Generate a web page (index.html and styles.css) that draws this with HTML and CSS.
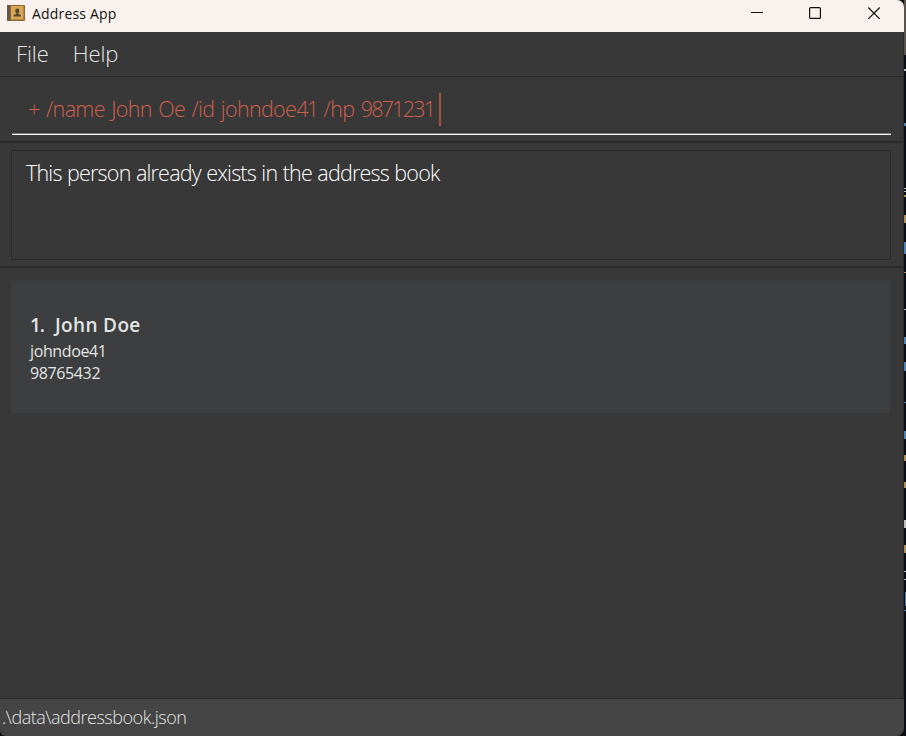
FILE: index.html
```html
<!DOCTYPE html>
<html lang="en">
<head>
<meta charset="utf-8">
<title>Address App</title>
<link rel="stylesheet" href="styles.css">
</head>
<body>
<div class="desktop">
<div class="window">
  <header class="titlebar">
    <svg class="app-icon" width="18" height="18" viewBox="0 0 18 18">
      <rect x="0" y="1" width="18" height="16" rx="1" fill="#94652d"/>
      <rect x="0" y="1" width="3" height="16" fill="#66574c"/>
      <rect x="4" y="2" width="12.5" height="13.5" fill="#d6a755"/>
      <path d="M10.3 4.6a2.1 2.1 0 0 1 2.1 2.1c0 1.1-.5 1.900-1.100 2.400v.8l2.700 1v1.600H6.600v-1.600l2.700-1v-.8c-.6-.5-1.100-1.300-1.100-2.400a2.100 2.100 0 0 1 2.100-2.100z" fill="#574632"/>
    </svg>
    <span class="title">Address App</span>
    <svg class="controls" width="130" height="14" viewBox="0 0 130 14" fill="none" stroke="#111" stroke-width="1.200">
      <path d="M0 5.500h12" stroke-width="1"/>
      <rect x="58.600" y="0.600" width="10.800" height="10.800" rx="1"/>
      <path d="M117.300 .5l11.400 11.400M128.700 .5l-11.400 11.400"/>
    </svg>
  </header>
  <nav class="menubar">
    <span class="file">File</span>
    <span class="help">Help</span>
  </nav>
  <section class="command-pane">
    <div class="command-field"><span class="command">+ /name John Oe /id johndoe<span class="digits">41</span> /hp <span class="digits">9871231</span></span><i class="caret"></i></div>
  </section>
  <section class="result-pane">
    <div class="result-box"><span class="result">This person already exists in the address book</span></div>
  </section>
  <main class="list-pane">
    <article class="card">
      <h1><span class="index">1.</span><span class="name">John Doe</span></h1>
      <p class="user">johndoe41</p>
      <p class="phone">98765432</p>
    </article>
  </main>
  <footer class="statusbar"><span class="path">.\data\addressbook.json</span></footer>
</div>
<svg class="backdrop" width="2" height="736" viewBox="0 0 2 736">
  <path d="M0 0h2v55H0z" fill="#58544e"/>
  <path d="M0 69h2v2H0zM0 188h2v1H0zM0 191h2v1H0zM0 309h2v1H0zM0 520h2v8H0zM0 571h2v1H0zM0 579h2v1H0z" fill="#bbb"/>
  <path d="M0 195h2v2H0zM0 215h2v8H0zM0 272h2v1H0zM0 455h2v6H0zM0 482h2v6H0zM0 545h2v8H0z" fill="#a98d52"/>
  <path d="M0 123h2v3H0zM0 242h2v12H0zM0 337h2v7H0zM0 362h2v9H0zM0 402h2v1H0zM0 431h2v8H0zM1 592h1v14H1zM0 610h2v1H0z" fill="#4b83b5"/>
</svg>
</div>
</body>
</html>
```
FILE: styles.css
```css
* { box-sizing: border-box; }
body { margin: 0; background: #0c1016; font-family: "Open Sans", "Noto Sans", sans-serif; color: #e4e4e4; }
.desktop { display: flex; width: 906px; height: 736px; overflow: hidden; }
.window { width: 904px; height: 736px; display: flex; flex-direction: column; background: #383838; border-radius: 0 7px 8px 6px; overflow: hidden; }
.backdrop { flex: none; }
span, p { white-space: pre; }
.titlebar { flex: none; height: 32px; background: #f9f1ed; color: #111; display: flex; align-items: flex-start; padding: 4px 23px 0 7px; }
.app-icon { flex: none; }
.title { font-size: 14px; line-height: 20px; margin-left: 7px; letter-spacing: .17px; }
.controls { margin: 3px 0 0 auto; }
.menubar, .command-pane, .result-pane, .list-pane { border-right: 1px solid #2d2d2d; }
.menubar { flex: none; height: 45px; border-bottom: 1px solid #2a2a2a; display: flex; gap: 24px; padding-left: 16px; font-size: 22px; line-height: 43px; font-weight: 300; letter-spacing: -.1px; }
.command-pane { flex: none; height: 66px; padding: 8px 12px; border-bottom: 2px solid #2a2a2a; }
.command-field { height: 50px; border-bottom: 1px solid #fff; box-shadow: inset 0 -1px #777; display: flex; align-items: flex-start; padding: 8px 0 0 16px; color: #d0604c; font-size: 21.5px; font-weight: 300; }
.command { line-height: 30px; margin-top: 1px; letter-spacing: -.66px; word-spacing: 1.4px; }
.digits { letter-spacing: -1.75px; }
.caret { width: 2px; height: 33px; margin-left: 5px; background: #a65345; }
.result-pane { flex: none; height: 125px; padding: 7px 12px 6px 11px; border-bottom: 2px solid #2a2a2a; }
.result-box { height: 110px; border: 1px solid #2a2a2a; padding: 7px 14px; color: #fff; font-size: 21.5px; line-height: 30px; font-weight: 300; letter-spacing: -.8px; word-spacing: .6px; }
.list-pane { flex: 1; padding: 13px 13px 0 11px; }
.card { height: 132px; background: #3c3e3f; padding: 30px 19px; }
h1 { margin: 0 0 1px; font-size: 19px; line-height: 28px; font-weight: 600; display: flex; }
.index { width: 25px; letter-spacing: -1px; }
.name { letter-spacing: .35px; }
p { margin: 0; font-size: 16px; line-height: 22px; letter-spacing: -.38px; }
.statusbar { flex: none; height: 38px; border-top: 1px solid #2a2a2a; background: #454545; padding: 3px 2px; font-size: 18px; line-height: 30px; font-weight: 300; letter-spacing: -.48px; }
```
